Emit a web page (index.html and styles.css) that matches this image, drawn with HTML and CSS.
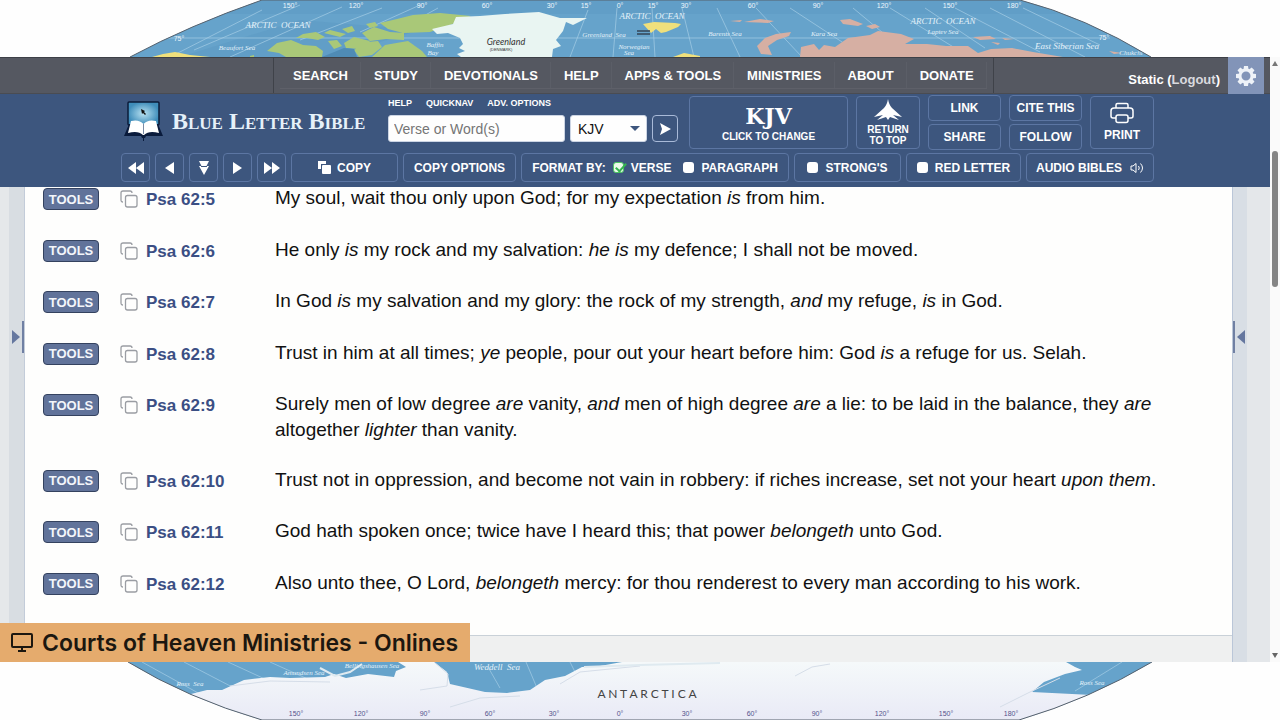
FILE: index.html
```html
<!doctype html>
<html lang="en">
<head>
<meta charset="utf-8">
<title>Psalm 62 - Blue Letter Bible</title>
<link rel="stylesheet" href="styles.css">
</head>

<body>

	<!-- World map, top edge -->
	<svg class="map map-top" viewBox="0 0 1280 57" preserveAspectRatio="xMidYMid slice" aria-hidden="true">
		<clipPath id="topClip"><path d="M130 57Q190 25 262 0H1020Q1085 17 1151 57Z"/></clipPath>
		<g clip-path="url(#topClip)">
			<rect class="sea" width="1280" height="57"/>
			<path class="shade" d="M262 0H1020L1060 14H220ZM180 57L300 20L420 30L330 57Z"/>
			<path class="grid" d="M170 57L262 10M194 50L300 5M230 57L342 7M300 40L382 8M360 32L420 5M420 18L438 8M570 57L588 10M613 57L617 8M655 57L652 8M694 57L682 8M740 57L717 8M802 57L756 8M865 57L790 8M853 8L912 57M890 8L955 48M925 8L985 48M955 8L1040 52M990 8L1085 57M1023 8L1100 45M165 38H1110"/>
			<path class="green" d="M267 51L277 43L291 40L303 45L316 46L323 51L322 57H286L279 53ZM296 38L303 34L316 32L325 37L318 40L307 38ZM324 33L330 30L346 34L340 37ZM342 29L352 26L355 31L348 33ZM344 43L354 37L370 41L360 49L346 48ZM354 50L367 42L378 41L382 47L372 55L359 57ZM362 33L374 27L390 32L404 33V40L386 39L370 41ZM380 23L397 19L413 15L440 13L471 16L450 25L430 32L403 33L388 29ZM372 57L385 45L408 41L422 51L427 57Z"/>
			<path class="green" d="M328 41L337 40L342 46L334 49ZM250 56l4-1v2h-4ZM366 24l9-2 3 4-8 2Z"/>
			<path class="shore" d="M322 57L344 48L354 49L357 57Z"/>
			<path class="ice" d="M432 29L453 24L456 17L480 16L505 14L539 12L560 18L587 18L573 25L566 22L563 31L556 40L561 46L553 49L552 57H461L457 54L465 51L459 48L463 44L460 38L448 33L437 34Z"/>
			<path class="yellow" d="M152 57L163 54L175 52L190 55L210 57ZM643 24L654 22L675 23L681 24L678 27L666 32L661 33L656 29L651 33ZM673 57L684 53L700 56V57Z"/>
			<path class="pink" d="M757 46L765 38L776 34L791 32L789 36L777 40L768 46L772 55L761 54ZM801 47L814 44L819 50L824 45L835 47L848 38L870 35L878 31L901 34L914 39L905 44L927 44L946 46L968 46L978 53L991 49L1012 48L1033 52L1063 57H800ZM840 20L850 19L863 24L858 26L843 24ZM866 26L875 24L880 27L872 29ZM730 21L742 20L740 22ZM744 22L760 19L774 21L768 23ZM973 37L990 36L996 39L980 40ZM991 42L1000 43L998 45ZM1002 38L1014 39L1005 40ZM1109 51L1122 53L1114 54Z"/>
			<g class="degrees">
				<text x="290" y="8">150°</text><text x="356" y="8">120°</text><text x="422" y="8">90°</text><text x="487" y="8">60°</text><text x="552" y="8">30°</text><text x="586" y="8">15°</text><text x="620" y="8">0°</text><text x="653" y="8">15°</text><text x="686" y="8">30°</text><text x="753" y="8">60°</text><text x="818" y="8">90°</text><text x="884" y="8">120°</text><text x="950" y="8">150°</text><text x="1014" y="8">180°</text><text x="179" y="41">75°</text><text x="1104" y="40">75°</text>
			</g>
			<g class="seas">
				<text x="278" y="28" class="ocean">ARCTIC&#160; OCEAN</text>
				<text x="652" y="19" class="ocean">ARCTIC&#160; OCEAN</text>
				<text x="943" y="24" class="ocean">ARCTIC&#160; OCEAN</text>
				<text x="237" y="50">Beaufort Sea</text><text x="435" y="47">Baffin</text><text x="433" y="55">Bay</text>
				<text x="604" y="37">Greenland &#160;Sea</text><text x="634" y="49">Norwegian</text><text x="629" y="55">Sea</text>
				<text x="725" y="36">Barents Sea</text><text x="824" y="36">Kara Sea</text><text x="943" y="34">Laptev Sea</text>
				<text x="1067" y="49" class="ocean">East Siberian Sea</text><text x="1131" y="55">Chukchi</text>
			</g>
			<text x="506" y="45" class="land">Greenland</text>
			<text x="501" y="51" class="tiny">(DENMARK)</text>
			<path d="M637 31H650M637 34H650" stroke="#345" stroke-width="1.5"/>
		</g>
		<path class="edge" d="M130 57Q190 25 262 0H1020Q1085 17 1151 57"/>
	</svg>

	<div class="browser">
		<div class="site">

			<!-- Grey menu bar -->
			<div class="topbar">
				<nav class="menu">
					<a href="#">SEARCH</a>
					<a href="#">STUDY</a>
					<a href="#">DEVOTIONALS</a>
					<a href="#">HELP</a>
					<a href="#">APPS &amp; TOOLS</a>
					<a href="#">MINISTRIES</a>
					<a href="#">ABOUT</a>
					<a href="#">DONATE</a>
				</nav>
				<div class="user">Static (<a href="#">Logout</a>)</div>
				<button class="settings" aria-label="Settings">
					<svg width="22" height="22" viewBox="0 0 22 22">
						<g fill="#eef2f8">
							<path id="tooth" d="M9 1H13L13.600 5H8.400Z"/>
							<use href="#tooth" transform="rotate(45 11 11)"/><use href="#tooth" transform="rotate(90 11 11)"/><use href="#tooth" transform="rotate(135 11 11)"/><use href="#tooth" transform="rotate(180 11 11)"/><use href="#tooth" transform="rotate(225 11 11)"/><use href="#tooth" transform="rotate(270 11 11)"/><use href="#tooth" transform="rotate(315 11 11)"/>
						</g>
						<circle cx="11" cy="11" r="6" fill="none" stroke="#eef2f8" stroke-width="3"/>
					</svg>
				</button>
			</div>

			<!-- Blue header -->
			<header class="header">
				<div class="header-row">
					<a class="logo" href="#">
						<svg width="40" height="40" viewBox="0 0 40 40" aria-hidden="true">
							<defs><radialGradient id="screen"><stop offset="0" stop-color="#b9e2f2"/><stop offset="1" stop-color="#3f8dba"/></radialGradient></defs>
							<rect x="4" y="1" width="31" height="23" rx="1" fill="url(#screen)" stroke="#0b1c3a" stroke-width="1.500"/>
							<path d="M5 23L0 35H17L18 37H19V40H20V37H21L22 35H39L34 23Z" fill="#0a1b3c"/>
							<path d="M7 20Q15 18 19.500 23Q24 18 32 20L35 32Q25 29 20 34H19Q14 29 4 32Z" fill="#fff"/>
							<path d="M19.500 23V33" stroke="#7b8ba5"/>
							<path d="M17 8L18 13L19 12L21 14L22 13L20 11L21 10Z" fill="#111"/>
						</svg>
						<span>Blue Letter Bible</span>
					</a>

					<form class="search">
						<div class="search-links">
							<a href="#">HELP</a>
							<a href="#">QUICKNAV</a>
							<a href="#">ADV. OPTIONS</a>
						</div>
						<div class="search-fields">
							<input type="text" name="criteria" placeholder="Verse or Word(s)" aria-label="Verse or Word(s)">
							<div class="version">
								<select name="version" aria-label="Version">
									<option>KJV</option>
								</select>
							</div>
							<button class="go" type="button" aria-label="Search">
								<svg width="12" height="14" viewBox="0 0 12 14"><path d="M1 1L12 7L1 13L3 7Z" fill="#fff"/></svg>
							</button>
						</div>
					</form>

					<button class="box change"><span class="bible">KJV</span>CLICK TO CHANGE</button>
					<button class="box return">
						<svg width="28" height="22" viewBox="0 0 28 22"><path d="M14 0Q15 6 18 9L28 18L19 16L25 21L16 18L14 21L12 18L3 21L9 16L0 18L10 9Q13 6 14 0Z" fill="#fff"/></svg>
						<span>RETURN<br>TO TOP</span>
					</button>
					<div class="links">
						<button class="box">LINK</button>
						<button class="box">CITE THIS</button>
						<button class="box">SHARE</button>
						<button class="box">FOLLOW</button>
					</div>
					<button class="box print">
						<svg width="24" height="22" viewBox="0 0 24 22" fill="none" stroke="#fff" stroke-width="1.500">
							<path d="M6 6V3Q6 1.500 7.500 1.500H16.500Q18 1.500 18 3V6M6 16H3Q1 16 1 14V9Q1 6 4 6H20Q23 6 23 9V14Q23 16 21 16H18"/>
							<rect x="6" y="13" width="12" height="7.500" rx="2"/>
						</svg>
						PRINT
					</button>
				</div>

				<div class="toolbar">
					<button class="box step" aria-label="Previous book"><svg width="16" height="12" viewBox="0 0 16 12"><path d="M8 0V12L0 6ZM16 0V12L8 6Z"/></svg></button>
					<button class="box step" aria-label="Previous chapter"><svg width="9" height="12" viewBox="0 0 9 12"><path d="M9 0V12L0 6Z"/></svg></button>
					<button class="box step" aria-label="Last verse"><svg width="10" height="14" viewBox="0 0 10 14"><path d="M0 0H10L7.500 5H10L5 14L0 5H2.500Z"/><path d="M2 5.500H8" stroke="#3d567e"/></svg></button>
					<button class="box step" aria-label="Next chapter"><svg width="9" height="12" viewBox="0 0 9 12"><path d="M0 0V12L9 6Z"/></svg></button>
					<button class="box step" aria-label="Next book"><svg width="16" height="12" viewBox="0 0 16 12"><path d="M0 0V12L8 6ZM8 0V12L16 6Z"/></svg></button>
					<button class="box copy">
						<svg width="13" height="13" viewBox="0 0 13 13"><path d="M0 0H8V3H3V8H0Z"/><rect x="4" y="4" width="9" height="9" rx="1"/></svg>
						COPY
					</button>
					<button class="box options">COPY OPTIONS</button>
					<div class="box format">
						FORMAT BY:
						<label><input type="checkbox" checked> VERSE</label>
						<label><input type="checkbox"> PARAGRAPH</label>
					</div>
					<label class="box strongs"><input type="checkbox"> STRONG'S</label>
					<label class="box red"><input type="checkbox"> RED LETTER</label>
					<button class="box audio">
						AUDIO BIBLES
						<svg class="line" width="14" height="12" viewBox="0 0 14 12"><path d="M1 4H3L6 1.500V10.500L3 8H1ZM8.500 4Q10 6 8.500 8M10.500 1.500Q14.500 6 10.500 10.500"/></svg>
					</button>
				</div>
			</header>

			<!-- Verses -->
			<div class="reader">
				<div class="gutter left"><button class="drawer" aria-label="Open left panel"></button></div>
				<main class="page">
					<div class="verses">
						<div class="verse">
							<button class="tools">TOOLS</button>
							<svg class="copy-icon" width="18" height="18"><use href="#copyIcon"/></svg>
							<a class="ref" href="#">Psa 62:5</a>
							<p>My soul, wait thou only upon God; for my expectation <em>is</em> from him.</p>
						</div>
						<div class="verse">
							<button class="tools">TOOLS</button>
							<svg class="copy-icon" width="18" height="18"><use href="#copyIcon"/></svg>
							<a class="ref" href="#">Psa 62:6</a>
							<p>He only <em>is</em> my rock and my salvation: <em>he is</em> my defence; I shall not be moved.</p>
						</div>
						<div class="verse">
							<button class="tools">TOOLS</button>
							<svg class="copy-icon" width="18" height="18"><use href="#copyIcon"/></svg>
							<a class="ref" href="#">Psa 62:7</a>
							<p>In God <em>is</em> my salvation and my glory: the rock of my strength, <em>and</em> my refuge, <em>is</em> in God.</p>
						</div>
						<div class="verse">
							<button class="tools">TOOLS</button>
							<svg class="copy-icon" width="18" height="18"><use href="#copyIcon"/></svg>
							<a class="ref" href="#">Psa 62:8</a>
							<p>Trust in him at all times; <em>ye</em> people, pour out your heart before him: God <em>is</em> a refuge for us. Selah.</p>
						</div>
						<div class="verse">
							<button class="tools">TOOLS</button>
							<svg class="copy-icon" width="18" height="18"><use href="#copyIcon"/></svg>
							<a class="ref" href="#">Psa 62:9</a>
							<p>Surely men of low degree <em>are</em> vanity, <em>and</em> men of high degree <em>are</em> a lie: to be laid in the balance, they <em>are</em> altogether <em>lighter</em> than vanity.</p>
						</div>
						<div class="verse">
							<button class="tools">TOOLS</button>
							<svg class="copy-icon" width="18" height="18"><use href="#copyIcon"/></svg>
							<a class="ref" href="#">Psa 62:10</a>
							<p>Trust not in oppression, and become not vain in robbery: if riches increase, set not your heart <em>upon them</em>.</p>
						</div>
						<div class="verse">
							<button class="tools">TOOLS</button>
							<svg class="copy-icon" width="18" height="18"><use href="#copyIcon"/></svg>
							<a class="ref" href="#">Psa 62:11</a>
							<p>God hath spoken once; twice have I heard this; that power <em>belongeth</em> unto God.</p>
						</div>
						<div class="verse">
							<button class="tools">TOOLS</button>
							<svg class="copy-icon" width="18" height="18"><use href="#copyIcon"/></svg>
							<a class="ref" href="#">Psa 62:12</a>
							<p>Also unto thee, O Lord, <em>belongeth</em> mercy: for thou renderest to every man according to his work.</p>
						</div>
					</div>
					<div class="page-foot"></div>
				</main>
				<div class="gutter right"><button class="drawer" aria-label="Open right panel"></button></div>
			</div>
		</div>

		<div class="scrollbar"><span class="up"></span><span class="thumb"></span><span class="down"></span></div>

		<!-- Stream caption -->
		<div class="caption">
			<svg width="22" height="20" viewBox="0 0 22 20" fill="none" stroke="#1c1710" stroke-width="2"><rect x="1" y="1" width="20" height="13" rx="1"/><path d="M11 14V18M7 18H15"/></svg>
			Courts of Heaven Ministries - Onlines
		</div>
	</div>

	<!-- World map, bottom edge -->
	<svg class="map map-bottom" viewBox="0 0 1280 58" preserveAspectRatio="xMidYMid slice" aria-hidden="true">
		<clipPath id="bottomClip"><path d="M128 0Q187 36 262 58H1019Q1090 37 1152 0Z"/></clipPath>
		<linearGradient id="snow" x2="0" y2="1"><stop offset="0" stop-color="#f5f9fa"/><stop offset="1" stop-color="#e9eaf6"/></linearGradient>
		<g clip-path="url(#bottomClip)">
			<rect class="sea" width="1280" height="58"/>
			<path class="grid" d="M142 0L200 32M184 0L238 28M228 0L280 24M270 0L310 18M488 5L500 26M526 0L537 26M570 0L575 10M1075 29L1122 0"/>
			<path class="snow" d="M187 33L207 28L222 28L244 18L270 15L290 16L325 15L334 12L346 16L368 12L394 15L396 9L406 5L398 0H434L447 10L450 22L485 30L507 31L530 28L545 18L565 14L582 5L600 4L622 0H1066L1075 5L1082 8L1065 12L1044 20L1032 30L1092 33V58H187Z"/>
			<path d="M434 0L448 12L447 24L420 28M560 22L580 10L640 4M795 14L812 5L830 2M230 24L270 19L330 20M1000 45L1030 30L1060 16M450 45L480 36L520 34" fill="none" stroke="#d5dde8" stroke-width="1"/>
			<path d="M320 6L335 14L350 10L362 2M584 5L640 3L720 1" fill="none" stroke="#dfeaf0" stroke-width="2"/>
			<g class="seas">
				<text x="190" y="24">Ross &#160;Sea</text><text x="304" y="13">Amundsen Sea</text><text x="372" y="6">Bellingshausen Sea</text><text x="497" y="8" class="weddell">Weddell &#160;Sea</text><text x="1092" y="23">Ross Sea</text>
			</g>
			<text x="647" y="36" class="antarctica">A N T A R C T I C A</text>
			<g class="degrees dark">
				<text x="296" y="54">150°</text><text x="361" y="54">120°</text><text x="425" y="54">90°</text><text x="490" y="54">60°</text><text x="554" y="54">30°</text><text x="620" y="54">0°</text><text x="687" y="54">30°</text><text x="752" y="54">60°</text><text x="817" y="54">90°</text><text x="882" y="54">120°</text><text x="946" y="54">150°</text><text x="1011" y="54">180°</text>
			</g>
		</g>
		<path class="edge" d="M128 0Q187 36 262 58H1019Q1090 37 1152 0"/>
	</svg>

	<!-- Shared copy icon -->
	<svg width="0" height="0" class="symbols">
		<symbol id="copyIcon" viewBox="0 0 18 18">
			<path d="M3 12Q1 12 1 10V3Q1 1 3 1H10Q12 1 12 3M7 5.500H15Q17 5.500 17 7.500V15Q17 17 15 17H7.500Q5.500 17 5.500 15V7.500Q5.500 5.500 7.500 5.500" fill="none" stroke="#9a9da3" stroke-width="1.300"/>
		</symbol>
	</svg>

</body>
</html>
```
FILE: styles.css
```css
* {
	box-sizing: border-box;
}

body {
	margin: 0;
	min-height: 100vh;
	display: flex;
	flex-direction: column;
	position: relative;
	background: #fefefe;
	font-family: "Liberation Sans", Arial, sans-serif;
}

a {
	color: inherit;
	text-decoration: none;
}

button {
	font-family: inherit;
	cursor: pointer;
}

svg {
	flex: none;
}

.symbols {
	position: absolute;
}

/* Map */
.map {
	display: block;
	width: 100%;
}
.map-top {
	height: 57px;
}
.map-bottom {
	height: 58px;
}
.sea { fill: #66a3cb; }
.shade { fill: #5c99c4; opacity: 0.5; }
.green { fill: #a9c878; }
.shore { fill: #4f8bb5; }
.ice { fill: #e9f5f2; }
.yellow { fill: #f0e07c; }
.pink { fill: #d6afa3; }
.snow { fill: url(#snow); }
.grid {
	fill: none;
	stroke: #a5cde5;
	stroke-width: 1;
	opacity: 0.7;
}
.edge {
	fill: none;
	stroke: #56616d;
	stroke-width: 1;
}
.degrees {
	font-size: 7px;
	fill: #eef6fb;
	text-anchor: middle;
}
.degrees.dark {
	fill: #55508c;
}
.seas {
	font-family: "Liberation Serif", serif;
	font-style: italic;
	font-size: 7px;
	fill: #e3f1f9;
	text-anchor: middle;
}
.seas .ocean {
	font-size: 9px;
}
.seas .weddell {
	font-size: 9px;
}
.land {
	font-family: Lato, sans-serif;
	font-style: italic;
	font-size: 9px;
	fill: #333;
	text-anchor: middle;
}
.tiny {
	font-size: 4px;
	fill: #333;
	text-anchor: middle;
}
.antarctica {
	font-family: Lato, sans-serif;
	font-size: 12px;
	fill: #444;
	text-anchor: middle;
}

/* Browser */
.browser {
	flex: 1;
	display: flex;
	position: relative;
}
.site {
	flex: 1;
	display: flex;
	flex-direction: column;
}
.scrollbar {
	width: 10px;
	padding: 4px 2px;
	display: flex;
	flex-direction: column;
	align-items: center;
	background: #fafafa;
}
.up, .down {
	border: 3px solid transparent;
}
.up {
	border-top: 0;
	border-bottom: 5px solid #777;
}
.down {
	margin-top: auto;
	border-bottom: 0;
	border-top: 5px solid #666;
}
.thumb {
	width: 6px;
	height: 136px;
	margin-top: 85px;
	border-radius: 3px;
	background: #858585;
}

/* Menu bar */
.topbar {
	height: 37px;
	padding-right: 6px;
	display: flex;
	background: #555861;
	border-top: 1px solid #3d4047;
	border-bottom: 1px solid #4a4c52;
	color: #fff;
	font-weight: bold;
	font-size: 13px;
}
.menu {
	margin-left: 273px;
	padding: 4px 6px;
	display: flex;
	border-left: 1px solid #3f4249;
	border-right: 1px solid #3f4249;
}
.menu a {
	padding: 0 13px;
	line-height: 27px;
	background: linear-gradient(#5b5e67, #5b5e67) right / 1px 100% no-repeat;
	border-bottom: 1px solid #5e6069;
}
.user {
	margin-left: auto;
	padding: 9px 8px 0;
	line-height: 26px;
}
.user a {
	color: #d9dade;
}
.settings {
	width: 36px;
	margin: -1px 0;
	padding: 0;
	border: 0;
	display: grid;
	place-items: center;
	background: #8294b8;
}

/* Header */
.header {
	height: 93px;
	padding: 1px 116px 0 121px;
	background: #3d567e;
	color: #fff;
}
.header-row {
	height: 54px;
	display: flex;
	align-items: center;
	gap: 8px;
}
.logo {
	flex: 1;
	padding-left: 3px;
	padding-bottom: 2px;
	display: flex;
	align-items: center;
	gap: 8px;
	font-family: "Liberation Serif", serif;
	font-variant: small-caps;
	font-size: 24px;
	font-weight: bold;
	color: #e6f1f9;
	white-space: nowrap;
}
.search {
	width: 290px;
	margin-right: 3px;
	align-self: flex-start;
}
.search-links {
	display: flex;
	gap: 14px;
	font-size: 9px;
	font-weight: bold;
	line-height: 16px;
}
.search-fields {
	margin-top: 4px;
	display: flex;
	gap: 5px;
}
.search-fields input {
	width: 177px;
	height: 27px;
	padding: 0 5px;
	border: 1px solid #ccd5e4;
	border-radius: 3px;
	background: #fefefe;
	font: 14px "Liberation Sans", Arial, sans-serif;
}
.search-fields input::placeholder {
	color: #757575;
}
.version {
	position: relative;
}
.version select {
	width: 77px;
	height: 27px;
	padding: 0 7px;
	border: 1px solid #ccd5e4;
	border-radius: 3px;
	appearance: none;
	background: #fefefe;
	color: #111;
	font: 14px "Liberation Sans", Arial, sans-serif;
}
.version::after {
	content: "";
	position: absolute;
	right: 7px;
	top: 11px;
	border: 5px solid transparent;
	border-top-color: #3d567e;
	border-bottom: 0;
}
.go {
	width: 26px;
	height: 27px;
	padding: 0;
	display: grid;
	place-items: center;
	border: 1px solid #a9bad8;
	border-radius: 4px;
	background: #3d567e;
}

.box {
	padding: 0;
	display: flex;
	align-items: center;
	justify-content: center;
	border: 1px solid #5c76a3;
	border-radius: 4px;
	background: #3d567e;
	color: #fff;
	font-size: 12px;
	font-weight: bold;
	white-space: nowrap;
}
.change, .return, .print {
	height: 53px;
	flex-direction: column;
}
.change {
	width: 159px;
	gap: 2px;
	font-size: 10px;
}
.bible {
	font-family: "DejaVu Serif", serif;
	font-size: 22px;
	line-height: 26px;
}
.return {
	width: 64px;
	font-size: 10px;
	line-height: 11px;
	gap: 3px;
}
.print {
	width: 64px;
	gap: 4px;
}
.links {
	display: grid;
	grid-template-columns: 73px 73px;
	grid-auto-rows: 26px;
	gap: 3px 8px;
}

/* Toolbar */
.toolbar {
	margin-top: 4px;
	display: flex;
	gap: 5px;
}
.toolbar .box {
	height: 29px;
}
.toolbar svg {
	fill: #fff;
}
.toolbar .line {
	fill: none;
	stroke: #fff;
}
.step { width: 29px; }
.copy {
	width: 107px;
	gap: 6px;
}
.options { width: 113px; }
.format { width: 268px; gap: 7px; }
.strongs { width: 107px; }
.red { width: 115px; }
.audio { width: 128px; gap: 8px; }
.format label {
	display: flex;
	align-items: center;
}
.format label + label {
	margin-left: 5px;
}
.toolbar input {
	width: 11px;
	height: 11px;
	margin: 0 7px 0 0;
	position: relative;
	appearance: none;
	border-radius: 3px;
	background: #fff;
}
.toolbar input:checked {
	background: #eafbe9;
	border: 1px solid #4cc764;
}
.toolbar input:checked::after {
	content: "";
	position: absolute;
	left: 4px;
	top: -2px;
	width: 4px;
	height: 9px;
	border: solid #35b44f;
	border-width: 0 2px 2px 0;
	transform: rotate(42deg);
}

/* Verses */
.reader {
	flex: 1;
	display: flex;
}
.gutter {
	display: flex;
	align-items: center;
}
.left {
	width: 25px;
	justify-content: flex-end;
	background: linear-gradient(to right, #e5e8ea 9px, #d8dde2 9px);
	border-right: 1px solid #c3ccd9;
}
.right {
	width: 38px;
	background: linear-gradient(to right, #d8dee5 14px, #e4e7ea 14px);
	border-left: 1px solid #bac6d8;
}
.drawer {
	width: 12px;
	height: 32px;
	margin-bottom: 176px;
	padding: 0;
	border: 0;
	background: none;
	display: flex;
	align-items: center;
}
.left .drawer {
	border-right: 2px solid #7080a3;
}
.right .drawer {
	border-left: 2px solid #7080a3;
	justify-content: flex-end;
}
.drawer::before {
	content: "";
	border: 7px solid transparent;
}
.left .drawer::before {
	border-left: 8px solid #65779f;
	border-right: 0;
}
.right .drawer::before {
	border-right: 8px solid #65779f;
	border-left: 0;
}
.page {
	flex: 1;
	display: flex;
	flex-direction: column;
	background: #fefefd;
}
.verses {
	flex: 1;
	margin-top: -2px;
	padding: 0 60px 37px 18px;
	display: flex;
	flex-direction: column;
	justify-content: space-between;
}
.verse {
	display: grid;
	grid-template-columns: 77px 26px 129px 1fr;
	align-items: start;
	line-height: 26px;
}
.tools {
	width: 56px;
	height: 22px;
	margin-top: 3px;
	padding: 0;
	border: 1px solid #34425f;
	border-radius: 4px;
	background: #61739a;
	color: #f3f6fa;
	font-size: 13px;
	font-weight: bold;
}
.copy-icon {
	margin-top: 5px;
}
.ref {
	padding-top: 2px;
	color: #3b4f84;
	font-size: 17px;
	font-weight: bold;
}
.verse p {
	margin: 0;
	color: #111;
	font-size: 19px;
}
.page-foot {
	height: 27px;
	background: #eff0f0;
	border-top: 1px solid #c9d1d8;
}

/* Caption */
.caption {
	position: absolute;
	left: 0;
	bottom: 0;
	height: 39px;
	padding: 0 12px 0 11px;
	display: flex;
	align-items: center;
	gap: 9px;
	background: #e5ab6d;
	color: #1c1710;
	font-family: Inter, sans-serif;
	font-weight: 600;
	font-size: 23px;
	white-space: nowrap;
}
```
